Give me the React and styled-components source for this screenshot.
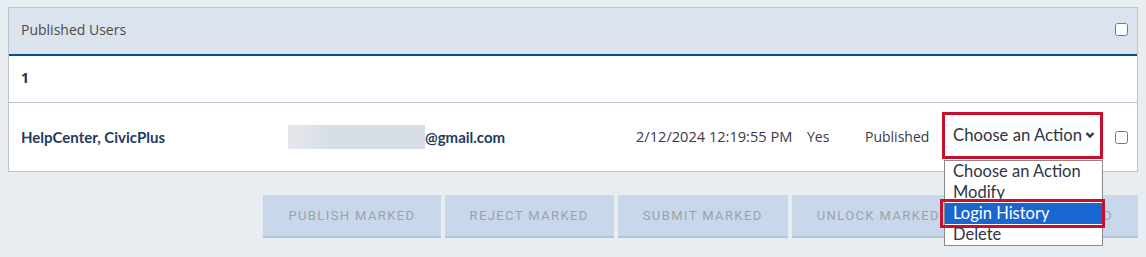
import React from 'react';
import styled, { createGlobalStyle } from 'styled-components';

const GlobalStyle = createGlobalStyle`
  *, *::before, *::after {
    box-sizing: border-box;
  }
  body {
    margin: 0;
    background: #e8edf2;
    font-family: "Open Sans", "Liberation Sans", sans-serif;
  }
`;

const Page = styled.div`
  min-height: 100vh;
  padding: 7px 8px 0;
`;

const Panel = styled.section`
  background: #fff;
  border: 1px solid #b6c4d4;
`;

const Header = styled.div`
  height: 48px;
  display: flex;
  align-items: center;
  justify-content: space-between;
  padding: 0 9px 3px 12px;
  background: #dae3ee;
  border-bottom: 2px solid #0d4d84;
  font-size: 14px;
  color: #4a4a4a;
`;

const Check = styled.input.attrs({ type: 'checkbox' })`
  margin: 0;
  width: 13px;
  height: 13px;
`;

const CountRow = styled.div`
  height: 47px;
  display: flex;
  align-items: center;
  padding: 0 12px 4px;
  border-bottom: 1px solid #b6c4d4;
  font-weight: 700;
  font-size: 14px;
  color: #26334a;
`;

const UserRow = styled.div`
  height: 68px;
  display: grid;
  grid-template-columns: 267px 348px 171px 58px 75px 175px 13px;
  align-items: center;
  padding: 0 9px 0 12px;
  font-size: 14px;
  color: #3b3947;
`;

const Name = styled.div`
  font-family: "Lato", "Liberation Sans", sans-serif;
  font-weight: 700;
  font-size: 15px;
  color: #1f3b60;
`;

const Email = styled(Name)`
  display: flex;
  align-items: center;
`;

const Blur = styled.span`
  display: inline-block;
  width: 137px;
  height: 24px;
  background: linear-gradient(90deg, #e4e8ed 0%, #d6dde5 35%, #d6dde5 100%);
`;

const Cell = styled.div`
  padding-bottom: 2px;
  font-size: ${(p) => p.$size || '14px'};
`;

const SelectWrap = styled.div`
  position: relative;
  width: 161px;
  margin: -4px 0 0 2px;
`;

const Select = styled.div`
  height: 47px;
  display: flex;
  align-items: center;
  justify-content: space-between;
  padding: 0 5px 0 8px;
  border: 3px solid #c8102e;
  background: #fff;
  font-family: "Lato", "Liberation Sans", sans-serif;
  font-size: 16.7px;
  color: #2f3542;
`;

const Options = styled.ul`
  position: absolute;
  top: 48px;
  left: 2px;
  width: 159px;
  margin: 0;
  padding: 0;
  list-style: none;
  background: #fff;
  border: 1px solid #8a8a8a;
  font-family: "Lato", "Liberation Sans", sans-serif;
  font-size: 16.5px;
  color: #2f3542;
  z-index: 2;
`;

const Option = styled.li`
  position: relative;
  height: 21px;
  line-height: 20px;
  padding-left: 8px;
  white-space: nowrap;
  background: ${(p) => (p.$active ? '#1a66d0' : 'transparent')};
  color: ${(p) => (p.$active ? '#fff' : 'inherit')};

  ${(p) =>
    p.$active &&
    `
    &::after {
      content: '';
      position: absolute;
      left: -5px;
      right: -3px;
      top: -4px;
      bottom: -4px;
      border: 3px solid #c8102e;
    }
  `}
`;

const Actions = styled.div`
  display: flex;
  justify-content: flex-end;
  gap: 4px;
  margin-top: 23px;
`;

const ActionButton = styled.button`
  height: 43px;
  padding: 0 25px;
  border: 0;
  border-bottom: 2px solid #b4c6da;
  background: #c8d8ea;
  font-family: "Roboto", "Liberation Sans", sans-serif;
  font-size: 13px;
  letter-spacing: 1.4px;
  color: #9aa3ac;
  text-transform: uppercase;
`;

const Chevron = () => (
  <svg width="10" height="8" viewBox="0 0 10 8">
    <path d="M1.5 2 L5 5.5 L8.5 2" fill="none" stroke="#2f3542" strokeWidth="2.4" />
  </svg>
);

const actions = ['Choose an Action', 'Modify', 'Login History', 'Delete'];
const buttons = ['Publish Marked', 'Reject Marked', 'Submit Marked', 'Unlock Marked', 'Delete Marked'];

export default function App() {
  return (
    <Page>
      <GlobalStyle />
      <Panel>
        <Header>
          Published Users
          <Check />
        </Header>
        <CountRow>1</CountRow>
        <UserRow>
          <Name>HelpCenter, CivicPlus</Name>
          <Email>
            <Blur />
            @gmail.com
          </Email>
          <Cell $size="14.6px">2/12/2024 12:19:55 PM</Cell>
          <Cell>Yes</Cell>
          <Cell>Published</Cell>
          <SelectWrap>
            <Select>
              Choose an Action
              <Chevron />
            </Select>
            <Options>
              {actions.map((a) => (
                <Option key={a} $active={a === 'Login History'}>
                  {a}
                </Option>
              ))}
            </Options>
          </SelectWrap>
          <Check />
        </UserRow>
      </Panel>
      <Actions>
        {buttons.map((b) => (
          <ActionButton key={b}>{b}</ActionButton>
        ))}
      </Actions>
    </Page>
  );
}
